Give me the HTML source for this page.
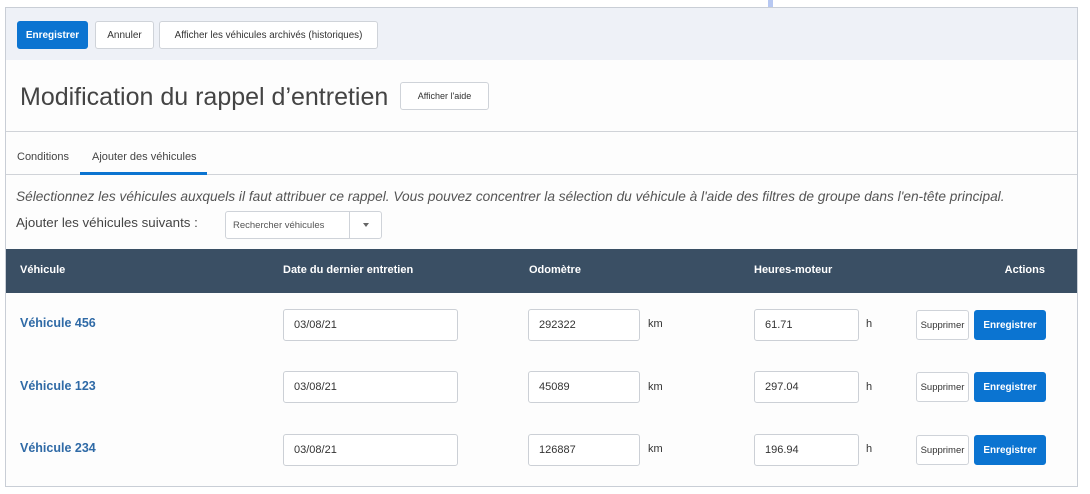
<!DOCTYPE html>
<html><head><meta charset="utf-8"><style>
*{box-sizing:border-box;margin:0;padding:0}
body{width:1090px;height:494px;background:#fff;font-family:"Liberation Sans",sans-serif;position:relative;overflow:hidden;color:#333}
.abs{position:absolute}
.panel{left:5px;top:7px;width:1073px;height:480px;border:1px solid #c9ced6;background:#fdfdfd}
.tb{left:6px;top:8px;width:1071px;height:52px;background:#eef1f7}
.btn{position:absolute;border:1px solid #cfd3d9;background:#fff;border-radius:3px;font-size:10px;color:#333;display:flex;align-items:center;justify-content:center;white-space:nowrap}
.pri{background:#0b74d1;border-color:#0b74d1;color:#fff;font-weight:bold}
.inp{position:absolute;border:1px solid #ccd0d6;border-radius:3px;background:#fff;font-size:11px;color:#333;padding-left:10px;display:flex;align-items:center;height:32px}
.th{position:absolute;top:264px;color:#fff;font-size:11px;font-weight:bold}
.veh{position:absolute;left:20px;color:#2f6aa6;font-weight:bold;font-size:12.5px}
.u{position:absolute;font-size:11px;color:#333}
</style></head><body>
<div class="abs" style="left:768px;top:0;width:5px;height:8px;background:#b7c8f2"></div>
<div class="abs panel"></div>
<div class="abs tb"></div>
<div class="btn pri" style="left:17px;top:21px;width:71px;height:28px">Enregistrer</div>
<div class="btn" style="left:95px;top:21px;width:59px;height:28px">Annuler</div>
<div class="btn" style="left:159px;top:21px;width:219px;height:28px;font-size:9.8px">Afficher les véhicules archivés (historiques)</div>
<div class="abs" style="left:20px;top:83px;font-size:25px;color:#444;white-space:nowrap">Modification du rappel d’entretien</div>
<div class="btn" style="left:400px;top:82px;width:89px;height:28px;font-size:9px">Afficher l'aide</div>
<div class="abs" style="left:6px;top:131px;width:1071px;height:1px;background:#d0d3d8"></div>
<div class="abs" style="left:17px;top:151px;font-size:11px;color:#444">Conditions</div>
<div class="abs" style="left:92px;top:151px;font-size:11px;color:#444">Ajouter des véhicules</div>
<div class="abs" style="left:6px;top:174px;width:1071px;height:1px;background:#d0d3d8"></div>
<div class="abs" style="left:80px;top:172px;width:127px;height:3px;background:#0b74d1"></div>
<div class="abs" style="left:16px;top:189px;font-size:13.7px;font-style:italic;color:#555;white-space:nowrap">Sélectionnez les véhicules auxquels il faut attribuer ce rappel. Vous pouvez concentrer la sélection du véhicule à l'aide des filtres de groupe dans l'en-tête principal.</div>
<div class="abs" style="left:16px;top:215px;font-size:13.3px;color:#444">Ajouter les véhicules suivants :</div>
<div class="btn" style="left:225px;top:211px;width:157px;height:28px;justify-content:flex-start;padding-left:7px;font-size:9.5px;color:#555">Rechercher véhicules<span style="position:absolute;left:123px;top:0;height:26px;border-left:1px solid #cfd3d9"></span><span style="position:absolute;left:137px;top:11px;border:3px solid transparent;border-top:4px solid #666"></span></div>
<div class="abs" style="left:6px;top:249px;width:1071px;height:44px;background:#3a4f64"></div>
<div class="th" style="left:20px">Véhicule</div>
<div class="th" style="left:283px">Date du dernier entretien</div>
<div class="th" style="left:529px">Odomètre</div>
<div class="th" style="left:754px">Heures-moteur</div>
<div class="th" style="right:45px">Actions</div>

<div class="veh" style="top:316px">Véhicule 456</div>
<div class="inp" style="left:283px;top:309px;width:175px">03/08/21</div>
<div class="inp" style="left:528px;top:309px;width:112px">292322</div>
<div class="u" style="left:648px;top:318px">km</div>
<div class="inp" style="left:754px;top:309px;width:105px">61.71</div>
<div class="u" style="left:866px;top:318px">h</div>
<div class="btn" style="left:916px;top:310px;width:53px;height:30px;font-size:9.5px">Supprimer</div>
<div class="btn pri" style="left:974px;top:310px;width:72px;height:30px">Enregistrer</div>

<div class="veh" style="top:379px">Véhicule 123</div>
<div class="inp" style="left:283px;top:371px;width:175px">03/08/21</div>
<div class="inp" style="left:528px;top:371px;width:112px">45089</div>
<div class="u" style="left:648px;top:381px">km</div>
<div class="inp" style="left:754px;top:371px;width:105px">297.04</div>
<div class="u" style="left:866px;top:381px">h</div>
<div class="btn" style="left:916px;top:372px;width:53px;height:30px;font-size:9.5px">Supprimer</div>
<div class="btn pri" style="left:974px;top:372px;width:72px;height:30px">Enregistrer</div>

<div class="veh" style="top:441px">Véhicule 234</div>
<div class="inp" style="left:283px;top:434px;width:175px">03/08/21</div>
<div class="inp" style="left:528px;top:434px;width:112px">126887</div>
<div class="u" style="left:648px;top:443px">km</div>
<div class="inp" style="left:754px;top:434px;width:105px">196.94</div>
<div class="u" style="left:866px;top:443px">h</div>
<div class="btn" style="left:916px;top:435px;width:53px;height:30px;font-size:9.5px">Supprimer</div>
<div class="btn pri" style="left:974px;top:435px;width:72px;height:30px">Enregistrer</div>
</body></html>
